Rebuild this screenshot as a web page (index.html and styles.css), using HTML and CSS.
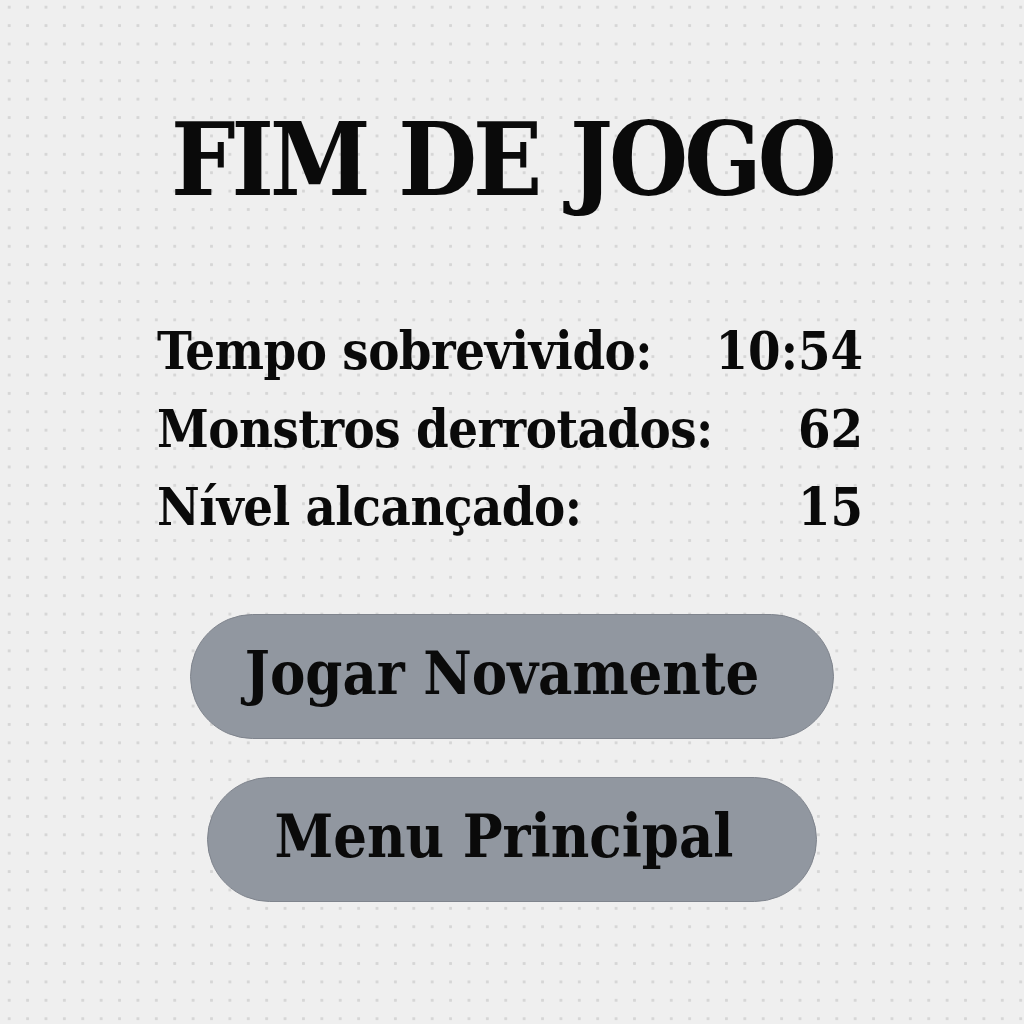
FILE: index.html
```html
<!DOCTYPE html>
<html lang="pt">
<head>
<meta charset="utf-8">
<title>Fim de Jogo</title>
<link rel="stylesheet" href="styles.css">
</head>
<body>
<main class="screen">
  <h1 class="title">FIM DE JOGO</h1>
  <div class="stats">
    <div class="row"><span class="label">Tempo sobrevivido:</span><span class="value">10:54</span></div>
    <div class="row"><span class="label">Monstros derrotados:</span><span class="value">62</span></div>
    <div class="row"><span class="label">Nível alcançado:</span><span class="value">15</span></div>
  </div>
  <div class="actions">
    <button class="btn btn-again">Jogar Novamente</button>
    <button class="btn btn-menu">Menu Principal</button>
  </div>
</main>
</body>
</html>
```

FILE: styles.css
```css
html, body {
  margin: 0;
  padding: 0;
}
body {
  width: 1024px;
  height: 1024px;
  background-color: #efefef;
  background-image: radial-gradient(circle, #d6d6d6 1.3px, transparent 1.8px);
  background-size: 18.4px 18.4px;
  background-position: 0px -2px;
  font-family: "DejaVu Serif", "Liberation Serif", serif;
  font-stretch: condensed;
  color: #0a0a0a;
  overflow: hidden;
}
.screen {
  display: flex;
  flex-direction: column;
  align-items: center;
  padding-top: 100px;
}
.title {
  margin: 0;
  font-size: 101px;
  font-weight: bold;
  line-height: 120px;
  letter-spacing: -4px;
  word-spacing: 4px;
  margin-left: -20px;
}
.stats {
  margin-top: 92px;
  width: 706px;
  display: flex;
  flex-direction: column;
  margin-left: -4px;
}
.row {
  display: flex;
  justify-content: space-between;
  font-size: 52px;
  font-weight: bold;
  line-height: 78px;
}
.label {
  letter-spacing: -0.5px;
}
.actions {
  margin-top: 68px;
  display: flex;
  flex-direction: column;
  align-items: center;
  gap: 38px;
}
.btn {
  font-family: "DejaVu Serif", "Liberation Serif", serif;
  font-stretch: condensed;
  font-weight: bold;
  font-size: 59px;
  color: #0a0a0a;
  background: #9197a0;
  border: 1.5px solid #7f848d;
  border-radius: 63px;
  height: 125px;
  padding: 0 20px 6px 0;
  display: flex;
  align-items: center;
  justify-content: center;
}
.btn-again {
  width: 644px;
}
.btn-menu {
  width: 610px;
  padding-right: 16px;
}
```
